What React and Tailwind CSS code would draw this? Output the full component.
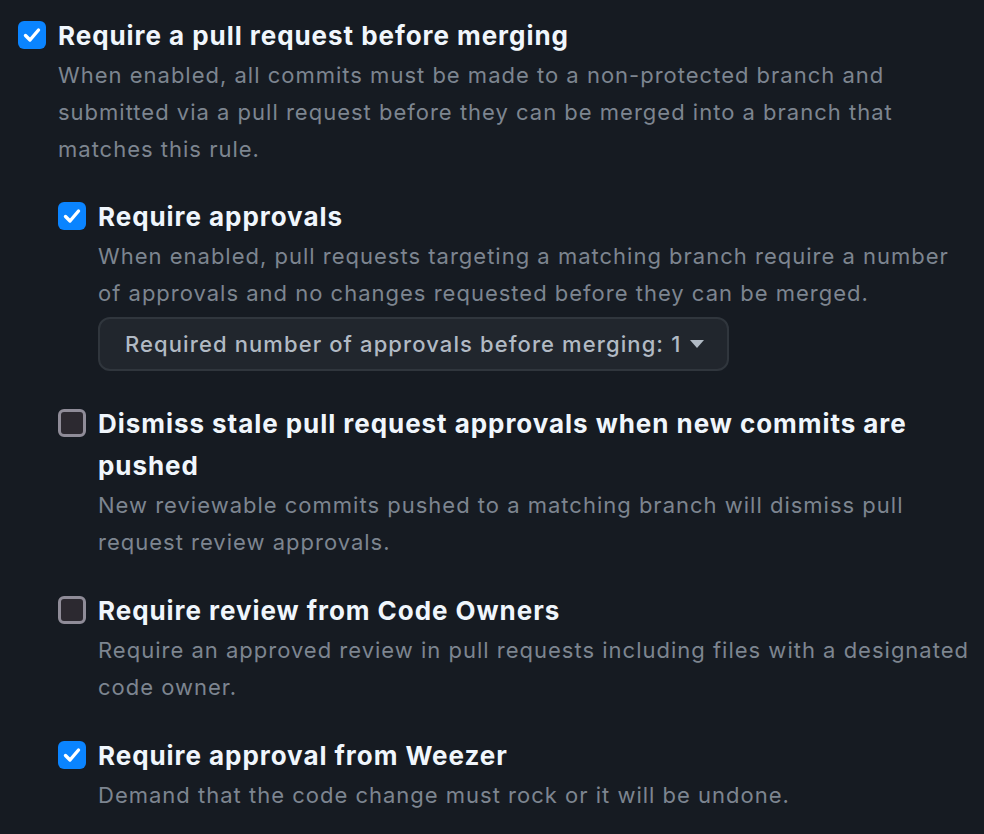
import { useState } from "react";

function Checkbox({ checked }) {
  if (checked) {
    return (
      <span className="flex h-[28px] w-[28px] shrink-0 items-center justify-center rounded-[6px] bg-[#0a84ff]">
        <svg width="22" height="22" viewBox="0 0 22 22" fill="none">
          <path
            d="M4.5 11.5l4.5 4.5 8.5-10"
            stroke="white"
            strokeWidth="3.4"
            strokeLinecap="round"
            strokeLinejoin="round"
          />
        </svg>
      </span>
    );
  }
  return (
    <span className="block h-[28px] w-[28px] shrink-0 rounded-[6px] border-[3px] border-[#8f8c98] bg-[#2c2930]" />
  );
}

function Option({ checked, title, children, extra }) {
  return (
    <div className="flex gap-[12px]">
      <div className="pt-[6px]">
        <Checkbox checked={checked} />
      </div>
      <div className="min-w-0 flex-1">
        <div className="text-[26px] font-bold leading-[42px] tracking-[0.95px] text-[#f0f6fc]">
          {title}
        </div>
        <div className="text-[22px] leading-[37px] tracking-[1px] text-[#7d8590]">
          {children}
        </div>
        {extra}
      </div>
    </div>
  );
}

export default function App() {
  const [approvals] = useState(1);

  return (
    <div className="h-[834px] w-[984px] overflow-hidden bg-[#161b22] pl-[18px] pr-[14px] pt-[15px] font-['Inter',sans-serif]">
      <Option checked title="Require a pull request before merging">
        When enabled, all commits must be made to a non-protected branch and
        submitted via a pull request before they can be merged into a branch that
        matches this rule.
      </Option>

      <div className="flex flex-col gap-[29px] pl-[40px] pt-[28px]">
        <Option
          checked
          title="Require approvals"
          extra={
            <div className="mb-[3px] mt-[5px] inline-flex h-[54px] items-center gap-[8px] rounded-[12px] border-2 border-[#30363d] bg-[#21262d] pl-[25px] pr-[22px] text-[22px] font-medium tracking-[1.1px] text-[#b1bac4]">
              Required number of approvals before merging: {approvals}
              <svg width="16" height="10" viewBox="0 0 16 10">
                <path d="M1 1h14L8 9z" fill="#b1bac4" />
              </svg>
            </div>
          }
        >
          When enabled, pull requests targeting a matching branch require a number
          of approvals and no changes requested before they can be merged.
        </Option>

        <Option title="Dismiss stale pull request approvals when new commits are pushed">
          New reviewable commits pushed to a matching branch will dismiss pull
          request review approvals.
        </Option>

        <Option title="Require review from Code Owners">
          Require an approved review in pull requests including files with a
          designated code owner.
        </Option>

        <Option checked title="Require approval from Weezer">
          Demand that the code change must rock or it will be undone.
        </Option>
      </div>
    </div>
  );
}
